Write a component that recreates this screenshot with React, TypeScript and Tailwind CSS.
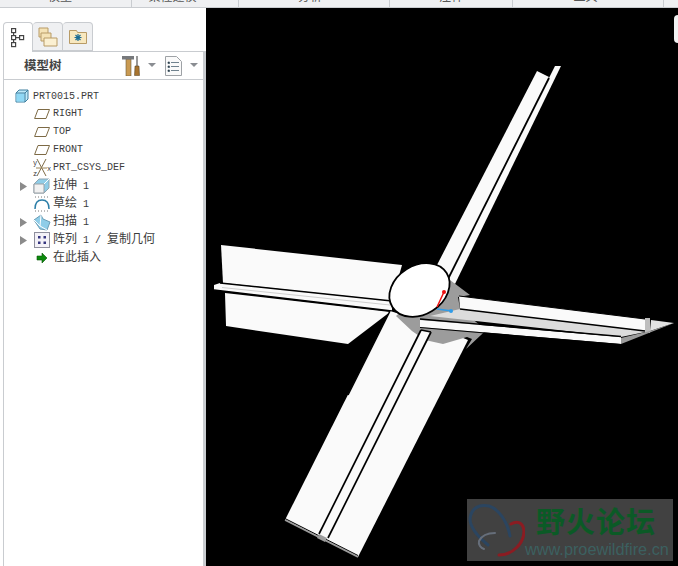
const cjk = '"Liberation Mono","Noto Sans CJK SC",monospace'
const ribbonTabs = [
  { label: '模型', width: 'w-[129px] pr-[14px]' },
  { label: '柔性建模', width: 'w-[107px] pr-[25px]' },
  { label: '分析', width: 'w-[151px] pr-[8px]' },
  { label: '注释', width: 'w-[123px] pr-[0px]' },
  { label: '工具', width: 'w-[151px] pr-[5px]' },
]

function Chevron() {
  return <svg width="8" height="5" viewBox="0 0 8 5"><path d="M0 0h8L4 4z" fill="#8a8d92" /></svg>
}

function Plane() {
  return (
    <svg width="16" height="10" viewBox="0 0 16 10">
      <path d="M4 .5h11.500l-3.500 9H.6z" fill="#fff" stroke="#7d6a45" strokeWidth="1" />
    </svg>
  )
}

function Csys() {
  return (
    <svg width="18" height="18" viewBox="0 0 18 18">
      <path d="M4 0l9 17M13 0L4 17" fill="none" stroke="#7d6a45" strokeWidth="1" />
      <path d="M3 9h11" fill="none" stroke="#9a8458" strokeWidth="1" />
      <text x="0" y="6" fontSize="7" fontFamily="Liberation Mono" fill="#333">y</text>
      <text x="0" y="17" fontSize="7" fontFamily="Liberation Mono" fill="#333">z</text>
      <text x="14" y="12" fontSize="7" fontFamily="Liberation Mono" fill="#333">x</text>
    </svg>
  )
}

function Part() {
  return (
    <svg width="14" height="14" viewBox="0 0 14 14">
      <path d="M1 4l3-3h9v9l-3 3H1z" fill="#bfeafa" stroke="#3f7f9f" />
      <path d="M1.500 4.500h8v8h-8z" fill="#8fd8f5" />
      <path d="M1 4h9v9M10 4l3-3" fill="none" stroke="#3f7f9f" />
    </svg>
  )
}

function Extrude() {
  return (
    <svg width="17" height="16" viewBox="0 0 17 16">
      <path d="M1 6l5-5h10v9l-5 5H1z" fill="#8fcde8" stroke="#8fa5b0" />
      <path d="M1 6h10v9H1z" fill="#f1f1f1" stroke="#9aa0a6" />
      <path d="M11 6l5-5" stroke="#fff" />
    </svg>
  )
}

function Sketch() {
  return (
    <svg width="16" height="16" viewBox="0 0 16 16">
      <path d="M1 13C1 7 4 4 8 4s7 3 7 9" fill="none" stroke="#2d7fa8" strokeWidth="1.500" />
      <path d="M1 1h14M1 15h14" stroke="#777" strokeDasharray="1 2" />
    </svg>
  )
}

function Sweep() {
  return (
    <svg width="18" height="17" viewBox="0 0 18 17">
      <path d="M1 6l7-5 2 4 7 3-3 8-7-1z" fill="#8fcde8" stroke="#6b9db5" />
      <path d="M1 6l6 6 7 4M8 1l-1 11" fill="none" stroke="#fff" />
    </svg>
  )
}

function Pattern() {
  return (
    <svg width="16" height="16" viewBox="0 0 16 16">
      <rect x="0.500" y="0.500" width="15" height="15" fill="#f3f1f7" stroke="#8e8e9c" />
      <path d="M4 4h2.500v2.500H4zM9.500 4H12v2.500H9.500zM4 9.500h2.500V12H4zM9.500 9.500H12V12H9.500z" fill="#35357f" />
    </svg>
  )
}

function InsertArrow() {
  return (
    <svg width="12" height="12" viewBox="0 0 12 12">
      <path d="M1 4h5V1l5 5-5 5V8H1z" fill="#0c8a0c" stroke="#075407" strokeWidth="0.600" />
    </svg>
  )
}

function Caret() {
  return <svg width="7" height="9" viewBox="0 0 7 9"><path d="M0 0l7 4.500L0 9z" fill="#8b8b8b" /></svg>
}

const rows = [
  { icon: <Plane />, label: 'RIGHT' },
  { icon: <Plane />, label: 'TOP' },
  { icon: <Plane />, label: 'FRONT' },
  { icon: <Csys />, label: 'PRT_CSYS_DEF' },
  { icon: <Extrude />, label: '拉伸 1', caret: true },
  { icon: <Sketch />, label: '草绘 1' },
  { icon: <Sweep />, label: '扫描 1', caret: true },
  { icon: <Pattern />, label: '阵列 1 / 复制几何', caret: true },
  { icon: <InsertArrow />, label: '在此插入' },
]

function ModelScene() {
  return (
    <svg className="block" width="472" height="558" viewBox="206 8 472 558">
      {/* left blade */}
      <path d="M221 245L402 265 392 301 223 283z" fill="#fafafa" />
      <path d="M225 293L390 312 348 344 226 326z" fill="#fafafa" />
      <path d="M214 285L220 283 392 301 392 311 214 290z" fill="#fafafa" />
      <path d="M220 283L392 301M214 290L392 311" stroke="#000" strokeWidth="1.500" />
      <path d="M222 287.500L390 305" stroke="#cfcfcf" strokeWidth="1" />

      {/* top arm */}
      <path d="M537 71L549 77 450 282 437 265z" fill="#fafafa" />
      <path d="M555 66L561 66 455 284 448 281 549 78z" fill="#fafafa" />
      <path d="M549 78L447 281" stroke="#000" strokeWidth="1.800" />

      {/* bottom blade */}
      <path d="M390 311L285 520 358 557 468 340 420 320z" fill="#fafafa" />
      <path d="M390 311L348 395" stroke="#000" strokeWidth="1.500" />
      <path d="M285 520L358 557" stroke="#9c9c9c" strokeWidth="1.500" />
      <path d="M285 518.500L358 555.500" stroke="#000" strokeWidth="1" />

      {/* gray collar behind the hub */}
      <path d="M396 316L412 331 425 340 443 344 467 337 472 339 466 349 481 335 486 330 460 309 458 297 470 295 450 280 430 285z" fill="#9c9c9c" />

      {/* bottom blade rib */}
      <path d="M421 330L431 332 328 538 319 534z" fill="#fafafa" />
      <path d="M421 330L431 332M421 330L319 534M431 332L328 538" stroke="#000" strokeWidth="1.700" />
      <path d="M319 534L327 538 325 542 317 538z" fill="#9c9c9c" />

      {/* right arm */}
      <path d="M430 316L460 309 645 331 650 331 621 337z" fill="#dcdcdc" />
      <path d="M459 296L645 319 645 331 460 309z" fill="#fafafa" />
      <path d="M460 309L645 331" stroke="#000" strokeWidth="1.500" />
      <path d="M459 296L645 319" stroke="#000" strokeWidth="1" />
      <path d="M645 318L650 318 650 333 645 333z" fill="#bdbdbd" />
      <path d="M651 320L674 323 650 331z" fill="#e2e2e2" />
      <path d="M621 338L650 331 674 323 621 344z" fill="#9c9c9c" />
      <path d="M420 320L621 337 621 344 420 327z" fill="#fafafa" />
      <path d="M420 319L621 336.500" stroke="#000" strokeWidth="1.300" />
      <path d="M420 327.500L621 344.500" stroke="#000" strokeWidth="1" />

      {/* hub */}
      <ellipse cx="419.500" cy="290" rx="32" ry="24.500" transform="rotate(-32 419.500 290)" fill="#fff" stroke="#000" strokeWidth="1.800" />
      <path d="M437 307L444 292" stroke="#ee1111" strokeWidth="1.500" />
      <circle cx="444" cy="292" r="2" fill="#ee1111" />
      <path d="M437 309L452 311" stroke="#2f9be8" strokeWidth="1.500" />
      <circle cx="451" cy="311" r="2" fill="#2f9be8" />
    </svg>
  )
}

export default function App() {
  return (
    <div className="relative flex h-[566px] w-[678px] flex-col overflow-hidden bg-white">
      {/* clipped ribbon tabs */}
      <div className="flex h-[8px] border-b border-[#c9ccd0] bg-[#eff0f2]">
        <div className="w-[3px]" />
        {ribbonTabs.map((tab) => (
          <div key={tab.label} className={`${tab.width} flex justify-center overflow-hidden border-r border-[#c9ccd0]`}>
            <span className="-mt-[10px] text-[12px] leading-[12px] text-[#555]" style={{ fontFamily: '"Noto Sans CJK SC",sans-serif' }}>{tab.label}</span>
          </div>
        ))}
      </div>

      <div className="flex min-h-0 flex-1">
        {/* model tree panel */}
        <div className="flex w-[206px] flex-col pl-[3px] pt-[13px]">
          <div className="flex h-[30px] items-end">
            <div className="-mb-px z-10 flex h-[30px] w-[30px] items-center justify-center rounded-t-sm border border-b-0 border-[#c9ccd0] bg-white">
              <svg width="15" height="20" viewBox="0 0 15 20" fill="none" stroke="#444" strokeWidth="1.200">
                <rect x="0.600" y="0.600" width="4" height="4" />
                <rect x="0.600" y="7.600" width="4" height="4" />
                <rect x="0.600" y="14.600" width="4" height="4" />
                <rect x="8.600" y="7.600" width="4" height="4" />
                <path d="M2.600 4.600v3M2.600 11.600v3M4.600 9.600h4" />
              </svg>
            </div>
            <div className="flex h-[29px] w-[30px] items-center justify-center rounded-t-sm border border-l-0 border-[#c9ccd0] bg-[#eff0f2]">
              <svg width="20" height="20" viewBox="0 0 20 20">
                <path d="M1 1h9v9H1z" fill="#f5e3b6" stroke="#b89b66" />
                <path d="M3 6h10v8H3z" fill="#f5e3b6" stroke="#b89b66" />
                <path d="M6 11h13v8H6z" fill="#fbf0d2" stroke="#b89b66" />
              </svg>
            </div>
            <div className="flex h-[29px] w-[30px] items-center justify-center rounded-t-sm border border-l-0 border-[#c9ccd0] bg-[#eff0f2]">
              <svg width="18" height="15" viewBox="0 0 18 15">
                <path d="M.5 1.500h7l1 2h9v11H.5z" fill="#f8e8bf" stroke="#b89b66" />
                <path d="M9 5v7M5.500 8.500h7M6.500 6l5 5M11.500 6l-5 5" stroke="#1a6c94" strokeWidth="1.200" />
              </svg>
            </div>
          </div>

          <div className="flex min-h-0 flex-1 flex-col border-l border-t border-[#c9ccd0] border-r-[3px] border-r-[#c9ccd0]">
            <div className="flex h-[28px] shrink-0 items-center border-b border-[#c9ccd0] pl-[20px]">
              <span className="w-[98px] text-[12.500px] font-bold text-[#444]" style={{ fontFamily: '"Noto Sans CJK SC",sans-serif' }}>模型树</span>
              <svg width="18" height="21" viewBox="0 0 18 21">
                <path d="M4 4h5v17H4z" fill="#c99a52" stroke="#6b5a3a" strokeWidth="0.600" />
                <path d="M0 1h12v3.500H0z" fill="#77797c" />
                <path d="M15 1v10" stroke="#777" strokeWidth="1.500" />
                <path d="M13 11h4l.5 9.500h-5z" fill="#a8742f" stroke="#4a3a1f" strokeWidth="0.500" />
              </svg>
              <span className="ml-[8px]"><Chevron /></span>
              <svg className="ml-[9px]" width="17" height="20" viewBox="0 0 17 20">
                <path d="M.5.500h11l5 5v14H.5z" fill="#fafafa" stroke="#9ea2a6" />
                <path d="M3 6h1.500v1.500H3zM3 10h1.500v1.500H3zM3 14h1.500v1.500H3zM6 6.500h8M6 10.500h8M6 14.500h8" stroke="#4c6372" strokeWidth="0.800" />
              </svg>
              <span className="ml-[8px]"><Chevron /></span>
            </div>

            <div className="flex flex-col pt-[7px]" style={{ fontFamily: cjk }}>
              <div className="flex h-[18px] items-center text-[10px] text-[#3c3c3c]">
                <span className="ml-[11px] mr-[4px] flex w-[14px] justify-center"><Part /></span>
                PRT0015.PRT
              </div>
              {rows.map((row) => (
                <div key={row.label} className="flex h-[18px] items-center text-[10px] text-[#3c3c3c]">
                  <span className="ml-[16px] flex w-[10px] items-center">{row.caret && <Caret />}</span>
                  <span className="flex w-[23px] justify-center">{row.icon}</span>
                  <span className="leading-none">{row.label.split(/([\u4e00-\u9fff]+)/).map((part, i) =>
                    /[\u4e00-\u9fff]/.test(part) ? <span key={i} className="text-[12px]">{part}</span> : part
                  )}</span>
                </div>
              ))}
            </div>
          </div>
        </div>

        <div className="min-w-0 flex-1 bg-black"><ModelScene /></div>
      </div>

      {/* small tab at the window edge */}
      <div className="absolute right-0 top-[15px] h-[28px] w-[4px] rounded-l-sm bg-[#f1f2f3]" />

      {/* forum watermark */}
      <div className="absolute left-[467px] top-[499px] flex h-[62px] w-[206px] bg-[#414141]">
        <svg className="ml-[1px] shrink-0" width="57" height="62" viewBox="0 0 57 62" fill="none" strokeLinecap="round">
          <path d="M20 46C8 36 2 28 2 20 3 9 11 5 21 7c9 3 18 14 21 30" stroke="#2b4560" strokeWidth="3" />
          <path d="M43 25c5-3 12-3 13 7 0 12-11 24-25 24" stroke="#8b1c22" strokeWidth="3" />
          <path d="M27 34c-6 0-13 2-16 8-1 4 2 7 5 8" stroke="#666e7a" strokeWidth="2" />
        </svg>
        <div className="flex min-w-0 flex-col pt-[4px]">
          <span className="ml-[11px] whitespace-nowrap text-[29px] font-bold leading-[34px] tracking-[1px] text-[#0b5a26]" style={{ fontFamily: '"Noto Sans CJK SC",sans-serif' }}>野火论坛</span>
          <span className="mt-[3px] whitespace-nowrap text-[16.300px] leading-[18px] text-[#3c6060]" style={{ fontFamily: '"Liberation Sans",sans-serif' }}>www.proewildfire.cn</span>
        </div>
      </div>
    </div>
  )
}
